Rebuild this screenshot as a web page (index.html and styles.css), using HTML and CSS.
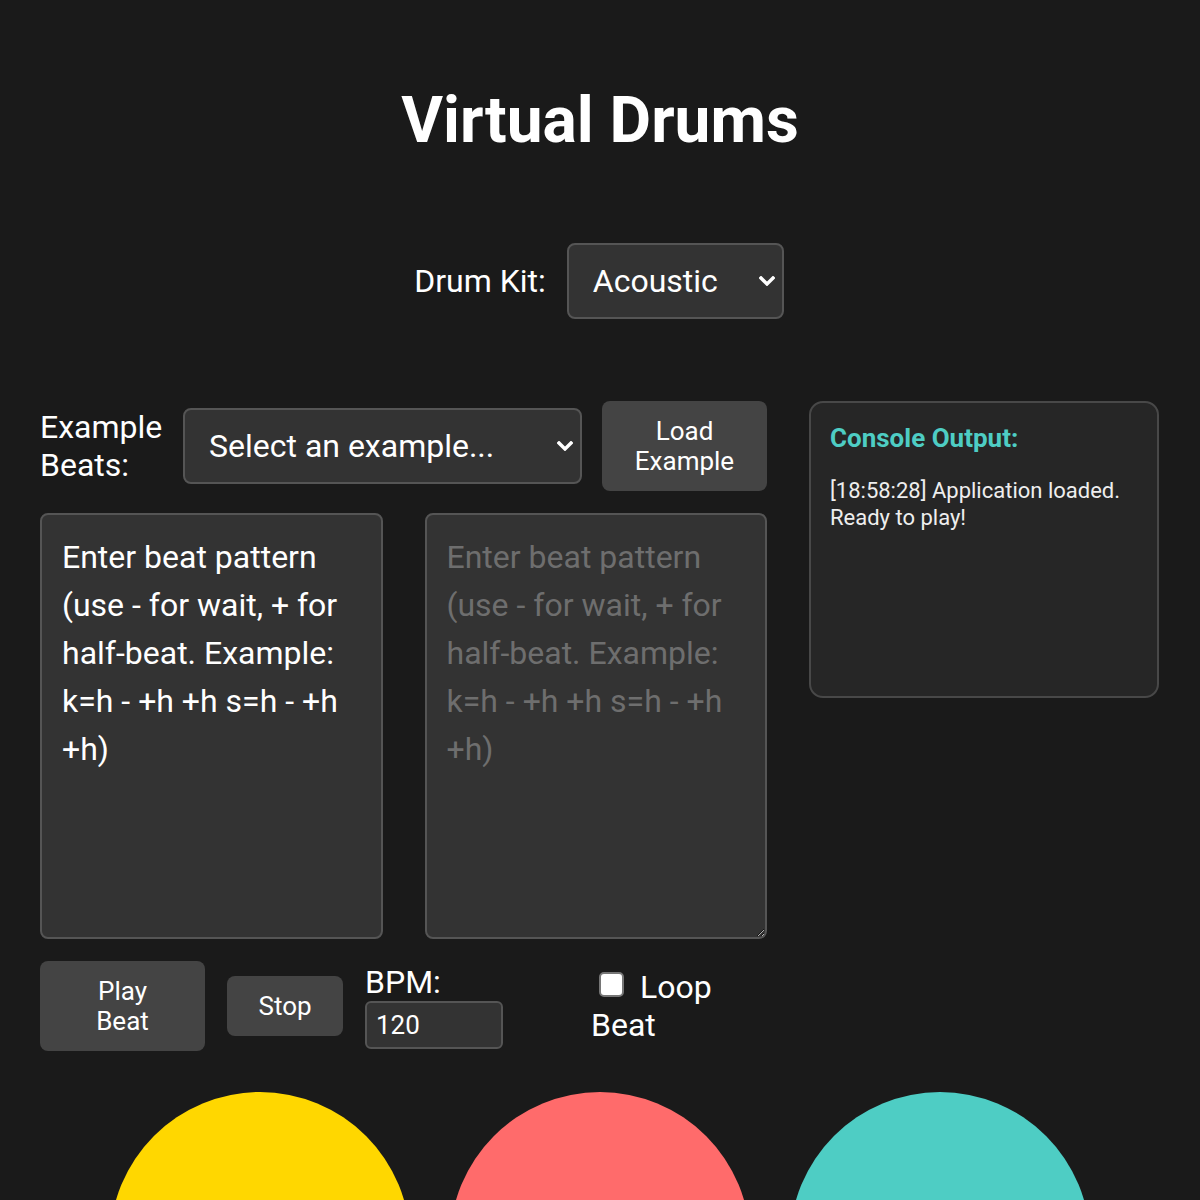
FILE: index.html
```html
<!DOCTYPE html>
<html lang="en">
<head>
<meta charset="utf-8">
<title>Virtual Drums</title>
<link rel="stylesheet" href="styles.css">
</head>
<body>
<div class="container">
  <h1 class="title">Virtual Drums</h1>

  <div class="kit-row">
    <label class="kit-label" for="kit">Drum Kit:</label>
    <div class="select-wrap kit-select">
      <select id="kit" class="select">
        <option>Acoustic</option>
        <option>Electronic</option>
      </select>
      <svg class="chev" width="16" height="10" viewBox="0 0 16 10"><path d="M2 2 L8 8 L14 2" fill="none" stroke="#fff" stroke-width="3.4" stroke-linecap="square" stroke-linejoin="miter"/></svg>
    </div>
  </div>

  <div class="main">
    <div class="left">
      <div class="example-row">
        <label class="ex-label" for="ex">Example Beats:</label>
        <div class="select-wrap ex-select">
          <select id="ex" class="select">
            <option>Select an example...</option>
          </select>
          <svg class="chev" width="16" height="10" viewBox="0 0 16 10"><path d="M2 2 L8 8 L14 2" fill="none" stroke="#fff" stroke-width="3.4" stroke-linecap="square" stroke-linejoin="miter"/></svg>
        </div>
        <button class="btn load-btn">Load Example</button>
      </div>

      <div class="editors">
        <div class="editor filled">Enter beat pattern (use - for wait, + for half-beat. Example: k=h - +h +h s=h - +h +h)</div>
        <textarea class="editor" placeholder="Enter beat pattern (use - for wait, + for half-beat. Example: k=h - +h +h s=h - +h +h)"></textarea>
      </div>

      <div class="controls">
        <button class="btn play-btn">Play Beat</button>
        <button class="btn stop-btn">Stop</button>
        <div class="bpm">
          <label class="bpm-label" for="bpm">BPM:</label>
          <input id="bpm" class="bpm-input" type="number" value="120">
        </div>
        <label class="loop"><input type="checkbox" class="check"> Loop Beat</label>
      </div>
    </div>

    <div class="console">
      <h3 class="console-title">Console Output:</h3>
      <div class="log">[18:58:28] Application loaded. Ready to play!</div>
    </div>
  </div>

  <div class="pads">
    <div class="pad kick"></div>
    <div class="pad snare"></div>
    <div class="pad hat"></div>
  </div>
</div>
</body>
</html>
```

FILE: styles.css
```css
* { box-sizing: border-box; }

html, body {
  margin: 0;
  padding: 0;
  background: #1a1a1a;
  color: #fff;
  font-family: Roboto, "Liberation Sans", sans-serif;
  overflow: hidden;
}

.container {
  padding: 0 40px;
  height: 1200px;
  overflow: hidden;
}

.title {
  margin: 83px 0 0;
  font-size: 64px;
  line-height: 75px;
  font-weight: 700;
  text-align: center;
}

.kit-row {
  margin-top: 85px;
  display: flex;
  justify-content: center;
  align-items: center;
  gap: 21px;
  height: 76px;
}

.kit-label, .ex-label, .bpm-label, .loop {
  font-size: 32px;
  line-height: 38px;
}

.kit-label { margin-left: -2px; }

.select-wrap {
  position: relative;
  height: 76px;
}

.kit-select { width: 217px; }
.ex-select { width: 399px; }

.select {
  appearance: none;
  -webkit-appearance: none;
  width: 100%;
  height: 100%;
  background: #333;
  color: #fff;
  border: 2px solid #555;
  border-radius: 8px;
  font-family: Roboto, "Liberation Sans", sans-serif;
  font-size: 32px;
  padding: 0 40px 0 24px;
  outline: none;
}

.chev {
  position: absolute;
  right: 9px;
  top: 33px;
}

.main {
  margin-top: 82px;
  display: flex;
  gap: 42px;
  align-items: flex-start;
}

.left { width: 727px; }

.example-row {
  display: flex;
  align-items: center;
  gap: 20px;
  height: 90px;
}

.ex-label { width: 123px; }

.btn {
  background: #444;
  color: #fff;
  border: none;
  border-radius: 8px;
  font-family: Roboto, "Liberation Sans", sans-serif;
  font-size: 26px;
  line-height: 30px;
  padding: 0 20px;
}

.load-btn { width: 165px; height: 90px; }

.editors {
  margin-top: 22px;
  display: flex;
  gap: 42px;
}

.editor {
  width: 343px;
  height: 426px;
  background: #333;
  border: 2px solid #555;
  border-radius: 8px;
  padding: 18px 20px 20px;
  color: #fff;
  font-family: Roboto, "Liberation Sans", sans-serif;
  font-size: 32px;
  line-height: 48px;
  outline: none;
  margin: 0;
}

textarea.editor { resize: both; }
textarea.editor::placeholder { color: #6e6e6e; }

.controls {
  margin-top: 22px;
  display: flex;
  align-items: center;
  height: 90px;
}

.play-btn { width: 165px; height: 90px; padding: 0 40px; }
.stop-btn { width: 116px; height: 60px; margin-left: 22px; }

.bpm {
  margin-left: 22px;
  display: flex;
  flex-direction: column;
}

.bpm-input {
  width: 138px;
  height: 48px;
  background: #333;
  color: #fff;
  border: 2px solid #555;
  border-radius: 6px;
  font-family: Roboto, "Liberation Sans", sans-serif;
  font-size: 26px;
  padding: 0 9px;
  outline: none;
  -moz-appearance: textfield;
}
.bpm-input::-webkit-inner-spin-button,
.bpm-input::-webkit-outer-spin-button { -webkit-appearance: none; margin: 0; }

.loop {
  margin-left: 88px;
  width: 132px;
  display: block;
}

.check {
  appearance: none;
  -webkit-appearance: none;
  width: 25px;
  height: 25px;
  margin: 0 8px 1px 8px;
  background: #fff;
  border: 2px solid #767676;
  border-radius: 5px;
  vertical-align: baseline;
}

.console {
  width: 350px;
  height: 297px;
  background: #262626;
  border: 2px solid #484848;
  border-radius: 14px;
  padding: 20px 19px;
}

.console-title {
  margin: 0;
  color: #4ecdc4;
  font-size: 26px;
  line-height: 30px;
  font-weight: 700;
}

.log {
  margin-top: 24px;
  font-size: 22px;
  line-height: 27px;
  color: #eee;
}

.pads {
  margin-top: 41px;
  display: flex;
  justify-content: center;
  gap: 40px;
}

.pad {
  width: 300px;
  height: 300px;
  border-radius: 50%;
  flex: none;
}
.kick { background: #ffd700; }
.snare { background: #ff6b6b; }
.hat { background: #4ecdc4; }
```
